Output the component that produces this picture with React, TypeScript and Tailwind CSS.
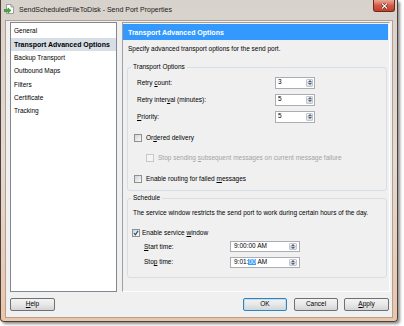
import type { ReactNode } from 'react';

const K = ({ children }: { children: ReactNode }) => (
  <span className="underline decoration-[0.6px] underline-offset-[1px]">{children}</span>
);

function Arrows({ className }: { className: string }) {
  return (
    <div className={`flex flex-col rounded-[1px] border border-[#c2c7cd] bg-gradient-to-b from-[#f7f7f7] to-[#dedede] ${className}`}>
      <div className="flex flex-1 items-center justify-center border-b border-[#c2c7cd]">
        <svg width="4" height="2" viewBox="0 0 4 2">
          <path d="M0 2L2 0L4 2Z" fill="#4d6185" />
        </svg>
      </div>
      <div className="flex flex-1 items-center justify-center">
        <svg width="4" height="2" viewBox="0 0 4 2">
          <path d="M0 0L2 2L4 0Z" fill="#4d6185" />
        </svg>
      </div>
    </div>
  );
}

function Spin({ value }: { value: string }) {
  return (
    <div className="flex h-[12px] w-[40px] border border-[#abadb3] bg-white p-[1px]">
      <span className="flex flex-1 items-center pl-[1px] leading-none">{value}</span>
      <Arrows className="w-[7px]" />
    </div>
  );
}

function TimeBox({ children }: { children: ReactNode }) {
  return (
    <div className="flex h-[11px] w-[70px] border border-[#abadb3] bg-white p-[1px]">
      <span className="flex flex-1 items-center pl-[2px] leading-none">{children}</span>
      <Arrows className="mr-[1px] w-[8px]" />
    </div>
  );
}

function Check({ checked = false, disabled = false }: { checked?: boolean; disabled?: boolean }) {
  return (
    <span
      className={
        disabled
          ? 'flex h-[8px] w-[8px] shrink-0 items-center justify-center border border-[#c8c8c8] bg-[#f4f4f4]'
          : 'flex h-[8px] w-[8px] shrink-0 items-center justify-center border border-[#8e8f8f] bg-gradient-to-br from-[#cfd3d8] to-[#fbfbfb]'
      }
    >
      {checked && (
        <svg width="6" height="6" viewBox="0 0 6 6">
          <path d="M1 3.2L2.4 4.8L5 0.8" fill="none" stroke="#2a4f84" strokeWidth="1.2" />
        </svg>
      )}
    </span>
  );
}

function Btn({ children, def = false, w }: { children: ReactNode; def?: boolean; w: string }) {
  return (
    <div
      className={`flex h-[13px] items-center justify-center rounded-[2px] border bg-gradient-to-b from-[#f3f3f3] via-[#e8e8e8] to-[#d4d4d4] leading-none ${w} ${
        def ? 'border-[#3c7fb1] shadow-[inset_0_0_0_1px_#b6e1f8]' : 'border-[#707070]'
      }`}
    >
      {children}
    </div>
  );
}

const items = ['General', 'Transport Advanced Options', 'Backup Transport', 'Outbound Maps', 'Filters', 'Certificate', 'Tracking'];

export default function App() {
  return (
    <div className="h-[326px] w-[404px] overflow-hidden bg-white font-['Liberation_Sans',Arial,sans-serif] text-[6.5px] text-black">
      <div className="flex h-[322px] w-[398px] flex-col rounded-b-[4px] border-x border-b border-[#4e4038] bg-gradient-to-b from-[#d8d2cc] via-[#e2dad3] to-[#eac5aa] shadow-[2px_2px_3px_rgba(0,0,0,0.45)]">
        {/* title bar */}
        <div className="flex h-[20px] shrink-0 items-start">
          <div className="ml-[3px] mt-[4px] flex items-center">
            <svg width="11" height="10" viewBox="0 0 11 10">
              <path d="M2.5 0.5H7L9.5 3V9.5H2.5Z" fill="#fdfdfd" stroke="#8a8a8a" strokeWidth="0.8" />
              <path d="M7 0.5V3H9.5" fill="none" stroke="#8a8a8a" strokeWidth="0.8" />
              <path d="M0 5.5H4V4L7 6.5L4 9V7.5H0Z" fill="#3fae3a" stroke="#217a1e" strokeWidth="0.5" />
            </svg>
            <span className="ml-[4px] text-[7px] leading-none text-[#1a1a1a]">SendScheduledFileToDisk - Send Port Properties</span>
          </div>
          <div className="ml-auto mr-[2px] flex h-[12px] w-[22px] items-center justify-center rounded-b-[3px] border-x border-b border-[#6a2a20] bg-gradient-to-b from-[#e9a996] via-[#d45a46] to-[#c2402c]">
            <svg width="7" height="6" viewBox="0 0 7 6">
              <path d="M1 0.5L6 5.5M6 0.5L1 5.5" stroke="#4a1a10" strokeWidth="2.2" />
              <path d="M1 0.5L6 5.5M6 0.5L1 5.5" stroke="#ffffff" strokeWidth="1.1" />
            </svg>
          </div>
        </div>

        {/* client area */}
        <div className="mx-[4px] flex h-[298px] flex-col border border-[#b3a08f] bg-[#f0f0f0]">
          <div className="mt-[1px] flex h-[270px]">
            {/* page list */}
            <div className="ml-[4px] w-[107px] border border-[#828790] bg-white pt-[1.5px]">
              {items.map((it, i) => (
                <div
                  key={it}
                  className={
                    i === 1
                      ? 'flex h-[13.4px] items-center bg-[#d8dee6] pl-[3px] text-[7px] font-bold leading-none'
                      : 'flex h-[13.4px] items-center pl-[3px] leading-none'
                  }
                >
                  {it}
                </div>
              ))}
            </div>

            {/* property page */}
            <div className="ml-[5px] flex w-[268px] flex-col border border-[#a0a0a0] border-b-[#fdfdfd] border-r-[#fdfdfd]">
              <div className="mr-[1px] mt-[1px] flex h-[16px] items-center bg-[#3399ff] pl-[5px] text-[7px] font-bold leading-none text-white">
                Transport Advanced Options
              </div>
              <div className="mt-[4px] flex h-[10px] items-center pl-[5px] leading-none">
                Specify advanced transport options for the send port.
              </div>

              <fieldset className="ml-[4px] mt-[8px] w-[260px] rounded-[3px] border border-[#d5dfe5] pb-[1px] pt-[2px]">
                <legend className="ml-[3px] px-[2px] leading-[10px]">Transport Options</legend>
                <div className="flex h-[17px] items-center pl-[9px]">
                  <span className="w-[138px]">
                    Retry <K>c</K>ount:
                  </span>
                  <Spin value="3" />
                </div>
                <div className="flex h-[17px] items-center pl-[9px]">
                  <span className="w-[138px]">
                    Retry inter<K>v</K>al (minutes):
                  </span>
                  <Spin value="5" />
                </div>
                <div className="flex h-[17px] items-center pl-[9px]">
                  <span className="w-[138px]">
                    <K>P</K>riority:
                  </span>
                  <Spin value="5" />
                </div>
                <div className="mt-[3px] flex h-[20px] items-center gap-[4px] pl-[6px]">
                  <Check />
                  <span>
                    Or<K>d</K>ered delivery
                  </span>
                </div>
                <div className="flex h-[20px] items-center gap-[4px] pl-[18px] text-[#a3a3a3]">
                  <Check disabled />
                  <span>
                    Stop sending <K>s</K>ubsequent messages on current message failure
                  </span>
                </div>
                <div className="mt-[1px] flex h-[20px] items-center gap-[4px] pl-[6px]">
                  <Check />
                  <span>
                    Enable routing for failed <K>m</K>essages
                  </span>
                </div>
              </fieldset>

              <fieldset className="ml-[4px] mt-[2px] w-[260px] rounded-[3px] border border-[#d5dfe5] pb-[7px]">
                <legend className="ml-[3px] px-[2px] leading-[10px]">Schedule</legend>
                <div className="mt-[5px] flex h-[10px] items-center pl-[5px] leading-none">
                  The service window restricts the send port to work during certain hours of the day.
                </div>
                <div className="mt-[8px] flex h-[13px] items-center gap-[2px] pl-[4px]">
                  <Check checked />
                  <span>
                    Enable service <K>w</K>indow
                  </span>
                </div>
                <div className="flex h-[15px] items-center pl-[16px]">
                  <span className="w-[86px]">
                    <K>S</K>tart time:
                  </span>
                  <TimeBox>9:00:00 AM</TimeBox>
                </div>
                <div className="flex h-[16px] items-center pl-[16px]">
                  <span className="w-[86px]">
                    Sto<K>p</K> time:
                  </span>
                  <TimeBox>
                    9:01:<span className="bg-[#3399ff] text-white">00</span>&nbsp;AM
                  </TimeBox>
                </div>
              </fieldset>
            </div>
          </div>

          {/* dialog buttons */}
          <div className="mt-[6px] flex h-[13px]">
            <div className="ml-[4px]">
              <Btn w="w-[45px]">
                <K>H</K>elp
              </Btn>
            </div>
            <div className="ml-auto mr-[3px] flex">
              <Btn w="w-[44px]" def>
                OK
              </Btn>
              <div className="ml-[7px]">
                <Btn w="w-[44px]">Cancel</Btn>
              </div>
              <div className="ml-[6px]">
                <Btn w="w-[45px]">
                  <K>A</K>pply
                </Btn>
              </div>
            </div>
          </div>
        </div>
      </div>
    </div>
  );
}
